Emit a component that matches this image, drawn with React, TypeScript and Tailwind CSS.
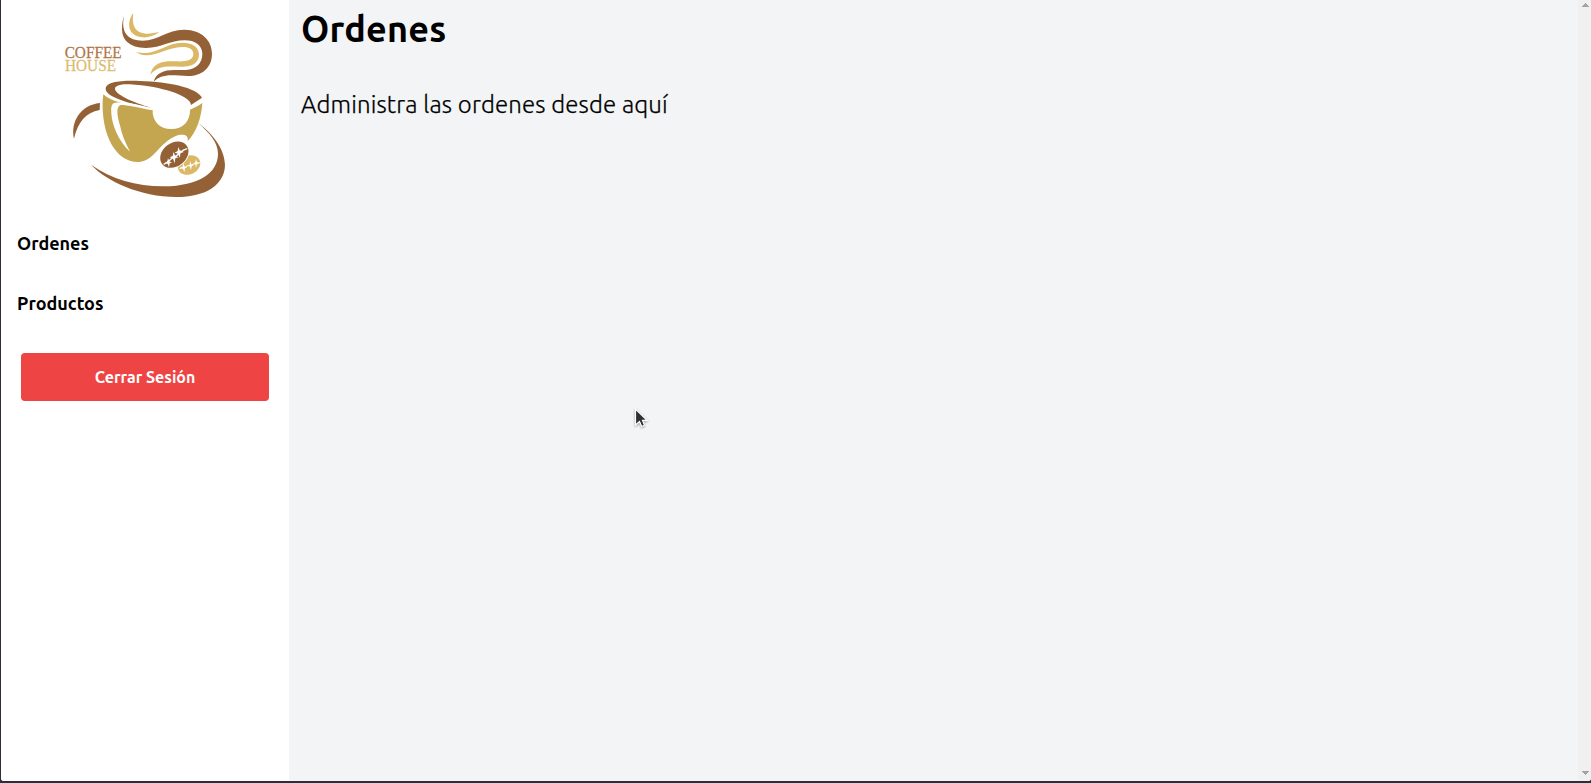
function CoffeeLogo() {
  return (
    <svg viewBox="0 0 570 630" className="h-[210px] w-[190px] shrink-0" aria-label="Coffee House">
      <g fill="#946136">
        <path d="M222 48C212 98 234 122 278 122C325 121 352 88 404 89C455 90 486 121 486 161C486 204 455 228 414 228L375 226C344 224 326 230 311 245C318 218 344 209 377 210L408 210C438 208 457 190 457 162C457 135 434 121 405 121C356 121 334 145 286 144C239 143 216 121 216 88C216 72 218 58 222 48Z" />
        <path fillRule="evenodd" d="M167 267C168 245 212 241 270 243C357 246 438 262 456 293L423 315C423 290 348 263 265 255C224 250 193 253 195 268C200 286 249 307 304 324C238 312 167 290 167 267Z" />
        <path d="M150 309L149 330C107 338 84 366 72 416C61 366 91 315 150 309Z" />
        <path d="M445 370C484 398 523 443 525 494C524 554 468 591 379 591C270 590 170 544 123 494C185 538 264 560 343 559C445 557 504 520 504 461C504 427 478 399 445 370Z" />
      </g>
      <g fill="#dbb866">
        <path d="M250 39C243 78 258 99 287 101C302 102 314 98 328 97C309 108 294 114 275 112C243 107 235 87 238 67C240 54 244 46 250 39Z" />
        <path d="M258 156C314 171 346 128 397 128C431 128 447 143 447 164C446 191 423 201 393 200C351 199 326 195 301 224C309 187 338 183 375 184C410 186 429 181 430 162C430 147 416 140 396 141C355 142 325 166 289 166C277 166 266 162 258 156Z" />
        <ellipse cx="417" cy="495" rx="35" ry="28" transform="rotate(-25 417 495)" />
      </g>
      <path fill="#c4a650" d="M160 283C181 305 230 313 308 329C306 363 329 387 364 387C399 387 421 363 420 329C432 324 445 318 457 309C454 356 438 397 413 424C416 406 403 402 383 406C323 429 314 486 264 486C197 486 154 405 158 300Z" />
      <path fill="#fff" d="M308 325C263 317 230 312 211 315C196 321 203 353 211 380C217 410 229 431 240 455C205 424 185 372 184 339C182 314 187 306 207 308Z" />
      <path fill="#fff" d="M205 308C226 304 270 315 308 324L308 331C265 322 225 313 205 315Z" />
      <ellipse cx="373" cy="464" rx="46" ry="35" transform="rotate(-37 373 464)" fill="#946136" stroke="#fff" strokeWidth="5" paintOrder="stroke" />
      <path d="M341 493C358 485 360 476 374 470C391 463 390 451 412 446" fill="none" stroke="#fff" strokeWidth="4" />
      <path fill="#fff" d="M354 474L358 484L366 488L359 490L357 502L353 491L344 489L352 485ZM371 456L375 467L386 472L376 475L374 490L369 476L359 472L368 468ZM385 441L389 451L402 456L391 459L390 474L384 461L374 458L383 453Z" />
      <path d="M388 506C399 503 403 503 414 497C428 496 436 488 451 488" fill="none" stroke="#fff" strokeWidth="3" />
      <path fill="#fff" d="M400 489L404 500L412 502L405 505L403 517L399 506L389 503L398 500ZM421 483L424 494L431 496L425 499L423 510L419 499L412 497L419 494ZM438 477L441 487L447 490L441 492L438 503L436 492L430 490L436 487Z" />
      <g fontFamily="Liberation Serif, serif" fontSize="51" strokeWidth="0.8">
        <text x="44" y="175" fill="#b0764a" stroke="#b0764a" textLength="171" lengthAdjust="spacingAndGlyphs">COFFEE</text>
        <text x="45" y="214" fill="#dcbc70" stroke="#dcbc70" textLength="153" lengthAdjust="spacingAndGlyphs">HOUSE</text>
      </g>
    </svg>
  );
}

function Sidebar() {
  return (
    <aside className="flex w-72 shrink-0 flex-col bg-white">
      <div className="flex justify-center pr-px">
        <CoffeeLogo />
      </div>
      <nav className="mt-[19px] flex flex-col gap-8 pl-4 text-[18px] leading-7 font-semibold">
        <a>Ordenes</a>
        <a>Productos</a>
      </nav>
      <button className="mx-5 mt-9 h-12 rounded bg-[#ef4444] text-[16px] font-semibold text-white">
        Cerrar Sesión
      </button>
    </aside>
  );
}

function Scrollbar() {
  return (
    <div className="flex w-[13px] shrink-0 flex-col items-center justify-between bg-[#f0f0f0] pt-[3px] pr-px pb-[6px] pl-[2px]">
      <svg className="h-1 w-[7px]" viewBox="0 0 7 4" fill="#a3a3a3" shapeRendering="crispEdges">
        <path d="M3 0h1v1h1v1h1v1h1v1H0V3h1V2h1V1h1z" />
      </svg>
      <svg className="h-1 w-[7px]" viewBox="0 0 7 4" fill="#a3a3a3" shapeRendering="crispEdges">
        <path d="M0 0h7v1H6v1H5v1H4v1H3V3H2V2H1V1H0z" />
      </svg>
    </div>
  );
}

export default function App() {
  return (
    <div className="h-screen overflow-hidden bg-[#2b2e3b] pb-[2px] pl-px font-['Ubuntu','Noto_Sans',sans-serif] text-black">
      <div className="flex h-full overflow-hidden rounded-b-[3px] bg-[#f3f4f6]">
        <Sidebar />
        <main className="flex min-w-0 flex-1 flex-col items-start pt-[9px] pl-3">
          <h1 className="text-[36px] leading-10 font-bold tracking-[0.2px]">Ordenes</h1>
          <p className="mt-10 text-[24px] leading-8 font-light tracking-[0.15px] [-webkit-text-stroke:0.25px_black]">
            Administra las ordenes desde aquí
          </p>
        </main>
        <Scrollbar />
      </div>
      <svg className="absolute top-[407px] left-[634px] h-[22px] w-[14px] drop-shadow-[0_1px_1px_rgba(0,0,0,0.35)]" viewBox="0 0 14 22">
        <path d="M1.5 2V18l4-3.5 2.2 5 2.8-1.2-2-5H13z" fill="#303030" stroke="#fff" strokeWidth="1.2" />
      </svg>
    </div>
  );
}
